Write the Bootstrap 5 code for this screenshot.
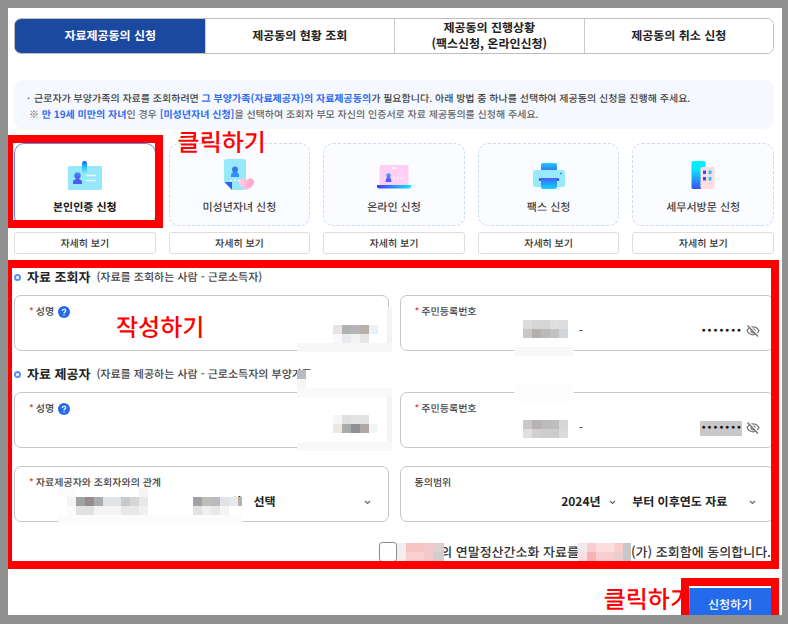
<!DOCTYPE html>
<html lang="ko">
<head>
<meta charset="utf-8">
<meta name="viewport" content="width=device-width, initial-scale=1">
<title>자료제공동의 신청</title>
<link href="https://cdn.jsdelivr.net/npm/bootstrap@5.3.0/dist/css/bootstrap.min.css" rel="stylesheet">
<style>
body{background:#919191;padding:8px 6px 9px 8px;font-family:"Noto Sans CJK KR",sans-serif;font-size:10px;line-height:16px;color:#333;text-rendering:geometricPrecision}
button,input,select{font-family:inherit;text-rendering:inherit}
.sheet{background:#fff;padding:10px 8px 0 6px}
.tabs{border:1px solid #bdbdbd;border-radius:7px}
.tabs .tab{flex:1 1 0;min-height:34px;border:0;border-left:1px solid #ccc;background:#fff;color:#222;font-size:12px;line-height:16px;font-weight:700;padding:0}
.tabs .tab.on{background:#1c49a0;color:#fff;border-color:#1c49a0}
.notice{margin-top:26px;background:#f5f9ff;border-radius:9px;padding:10px 13px 7px}
.notice p{margin:0;line-height:16px;color:#444;font-weight:500}
.notice p.sub{padding-left:2px;color:#666}
.notice .dot{display:inline-block;width:7px}
.notice b,.notice a{color:#2f6bf0;font-weight:700;text-decoration:none}
.methods{display:grid;grid-template-columns:repeat(5,1fr);gap:6px 13px;margin-top:14px}
.method{width:100%;height:83px;border:1px dashed #cbdaf3;border-radius:10px;background:#fafcff;color:#444;font-size:11px;line-height:16px;font-weight:500;padding:15px 0 10px}
.method.on{border:1px solid #5b8def;background:#fff;color:#111;font-weight:700}
.method svg{width:36px;height:36px}
.more{height:22px;border:1px solid #ddd;border-radius:3px;background:#fff;color:#333;font-size:10px;line-height:18px;font-weight:500;padding:0}
.frame{position:absolute;border:8px solid #f00;pointer-events:none;z-index:3}
.frame-card{inset:-8px -7px -2px -9px}
.frame-form{inset:-7px -5px -7px -10px}
.frame-send{inset:-10px -8px 0 -8px;border-bottom:0}
.memo{position:absolute;color:#f00;font-size:24px;line-height:28px;font-weight:500;white-space:nowrap;z-index:2}
.memo-card{left:9px;top:-16px}
.memo-name{left:101px;top:16px}
.memo-send{right:100%;top:-4px;margin-right:-3px}
.form-area{margin-top:13px}
.head{font-size:13px;line-height:20px;font-weight:700;color:#222;margin:0 0 8px;gap:6px}
.head-next{margin-top:13px}
.head small{font-size:11px;font-weight:500;color:#444;white-space:nowrap}
.ring{width:7px;height:7px;border:2px solid #5a90f3;border-radius:50%;box-sizing:border-box}
.pairs{display:grid;grid-template-columns:1fr 1fr;gap:11px}
.pairs-next{margin-top:18px}
.field{position:relative;border:1px solid #c6c6c6;border-radius:7px;padding:6px 13px 8px 14px;min-width:0}
.field label{line-height:18px;color:#444;font-weight:500;display:flex;align-items:center;gap:4px}
.req::before{content:"*";color:#f23c3c;margin-right:-2px}
.line{height:22px}
.plain{border:0;background:transparent;padding:0;width:100%;min-width:0;text-align:right;font-size:12px;line-height:16px;color:#222;outline:0}
.secret{font-family:"DejaVu Sans",sans-serif;font-size:10px;width:42px;height:15px;line-height:15px;color:#111}
.picked{background:#c8c8c8}
.dash{font-size:12px;width:21px;padding-left:5px;text-align:center}
.half{flex:1 1 0;min-width:0;position:relative}
.pick{appearance:none;border:0;background:transparent;padding:0;font-size:12px;line-height:18px;font-weight:700;color:#222}
.rel{flex:0 0 35%}
.span{flex:0 0 37%}
.mosaic{position:absolute;shape-rendering:crispEdges;pointer-events:none;z-index:1}
.m-name1{right:-4px;top:11px}
.m-name2{right:-4px;top:-23px}
.m-no{right:-6px}
.m-no1{top:-3px}
.m-no2{top:-36px}
.m-rel{right:12px;top:-5px}
.eye{border:0;background:none;padding:0;width:14px;height:14px;margin-left:4px}
.eye svg,.help svg{display:block}
.help{border:0;background:none;padding:2px 0 0}
.consent{margin-top:20px;padding-right:3px;height:20px;font-size:13px;line-height:20px;font-weight:500;color:#333;white-space:nowrap}
.consent input{width:18px;height:20px;margin:0;border:1px solid #8a8a8a;border-radius:4px;flex:none}
.consent svg{shape-rendering:crispEdges;flex:none;position:relative}
.mask-a{z-index:1;margin-right:-4px}
.mask-b{margin-left:-1px}
.send-row{margin-top:26px;padding-right:3px}
.send{display:block;width:82px;border:0;background:#246beb;color:#fff;font-size:12px;line-height:20px;font-weight:500;padding:7px 0 0}
</style>
</head>
<body>
<main class="sheet position-relative overflow-hidden">
  <nav class="tabs d-flex overflow-hidden" aria-label="제공동의">
    <button class="tab on" type="button">자료제공동의 신청</button>
    <button class="tab" type="button">제공동의 현황 조회</button>
    <button class="tab" type="button">제공동의 진행상황<br>(팩스신청, 온라인신청)</button>
    <button class="tab" type="button">제공동의 취소 신청</button>
  </nav>

  <section class="notice">
    <p><span class="dot">·</span>근로자가 부양가족의 자료를 조회하려면 <b>그 부양가족(자료제공자)의 자료제공동의</b>가 필요합니다. 아래 방법 중 하나를 선택하여 제공동의 신청을 진행해 주세요.</p>
    <p class="sub">※ <b>만 19세 미만의 자녀</b>인 경우 <a href="#minor">[미성년자녀 신청]</a>을 선택하여 조회자 부모 자신의 인증서로 자료 제공동의를 신청해 주세요.</p>
  </section>

  <svg width="0" height="0" class="position-absolute" aria-hidden="true">
    <defs>
      <linearGradient id="gv" x1="0" y1="0" x2="0" y2="1"><stop offset="0" stop-color="#1ad0f8"/><stop offset="1" stop-color="#3470f8"/></linearGradient>
      <linearGradient id="gw" x1="0" y1="0" x2="0" y2="1"><stop offset="0" stop-color="#3470f8"/><stop offset="1" stop-color="#12d6fa"/></linearGradient>
      <linearGradient id="gp" x1="0" y1="0" x2="0" y2="1"><stop offset="0" stop-color="#3a9cf8"/><stop offset="1" stop-color="#4a50f5"/></linearGradient>
      <linearGradient id="gh" x1="0" y1="0" x2="1" y2="0"><stop offset="0" stop-color="#4a36f5"/><stop offset="1" stop-color="#12e6fb"/></linearGradient>
      <linearGradient id="gb" x1="0" y1="0" x2="0" y2="1"><stop offset="0" stop-color="#00f2fb"/><stop offset=".3" stop-color="#08e5fb"/><stop offset="1" stop-color="#3a50fa"/></linearGradient>
      <linearGradient id="gc" x1="0" y1="0" x2="0" y2="1"><stop offset="0" stop-color="#2a50f5"/><stop offset=".45" stop-color="#1fc0f8"/><stop offset="1" stop-color="#5ac8f8" stop-opacity=".4"/></linearGradient>
      <linearGradient id="gr" x1="0" y1="0" x2="1" y2="0"><stop offset="0" stop-color="#ffd2e4"/><stop offset="1" stop-color="#ff9fc9"/></linearGradient>
      <symbol id="chev" viewBox="0 0 7 5"><path d="M1 1l2.500 2.500L6 1" fill="none" stroke="#666" stroke-width="1.200"/></symbol>
      <symbol id="hidden-eye" viewBox="0 0 14 14"><path d="M1 6.500C2.500 4 4.500 2.800 7 2.800S11.500 4 13 6.500C11.500 9.500 9.500 10.800 7 10.800S2.500 9.500 1 6.500z" fill="none" stroke="#777" stroke-width="1.300"/><circle cx="7" cy="6.800" r="2" fill="none" stroke="#777" stroke-width="1.200"/><path d="M2.800 1.200L13 12" stroke="#fff" stroke-width="1.500"/><path d="M1.500 1.500L12 12.500" stroke="#777" stroke-width="1.400"/></symbol>
      <symbol id="q" viewBox="0 0 12 12"><circle cx="6" cy="6" r="6" fill="#246beb"/><path d="M4.300 4.900C4.300 2.700 7.700 2.700 7.700 4.700 7.700 5.900 6 5.900 6 7.200M6 8.200v1.200" fill="none" stroke="#fff" stroke-width="1.200"/></symbol>
    </defs>
  </svg>

  <section class="methods">
    <div class="position-relative">
      <button class="method on d-flex flex-column align-items-center justify-content-between" type="button">
        <svg viewBox="0 0 36 36" aria-hidden="true"><rect x="1" y="7" width="34" height="24" rx="1.500" fill="#96e8fa"/><rect x="15" y="2" width="5" height="12" rx="2.500" fill="url(#gc)"/><circle cx="10.500" cy="16.500" r="3.200" fill="url(#gp)"/><path d="M6 25v-2c0-2 2-2.500 3-3h3c1 .500 3 1 3 3v2z" fill="#4d5cf7"/><path d="M9 18h3v3H9z" fill="#4a60f6"/><path d="M19.500 16.500h9.500M19.500 21.500h9.500" stroke="#e9fbff" stroke-width="1.500"/></svg>
        <span>본인인증 신청</span>
      </button>
      <div class="frame frame-card"></div>
    </div>
    <div class="position-relative">
      <button class="method d-flex flex-column align-items-center justify-content-between" type="button" id="minor">
        <svg viewBox="0 0 36 36" aria-hidden="true"><path d="M6 0h16a3 3 0 0 1 3 3v25a3 3 0 0 1-3 3h-10L3 23V3a3 3 0 0 1 3-3z" fill="#96e8fa"/><circle cx="14" cy="10.500" r="3" fill="#3478f5"/><path d="M10 18v-2c0-2 1.500-2.500 2.500-3h3c1 .500 2.500 1 2.500 3v2z" fill="#3590f6"/><path d="M3.500 23H11v8z" fill="#2564ee"/><path d="M9 21.500h10" stroke="#fff" stroke-width="1.600" stroke-dasharray="2 2"/><path d="M25.500 21.500c2-4 7.500-2.500 7.500 1.500 0 3-3.500 6-7.500 8-4-2-7.500-5-7.500-8 0-4 5.500-5.500 7.500-1.500z" fill="url(#gr)"/></svg>
        <span>미성년자녀 신청</span>
      </button>
      <span class="memo memo-card">클릭하기</span>
    </div>
    <div>
      <button class="method d-flex flex-column align-items-center justify-content-between" type="button">
        <svg viewBox="0 0 36 36" aria-hidden="true"><rect x="3.500" y="6" width="29" height="20.500" rx="1.500" fill="#ffd0f3"/><rect x="16" y="8" width="4.500" height="2" rx="1" fill="#fff"/><circle cx="12.500" cy="16.500" r="2.300" fill="#5b8df8"/><path d="M9.500 23l.500-3c.500-2 4.500-2 5 0l.500 3z" fill="#4d60f8"/><path d="M11 17h3v3h-3z" fill="#5478f8"/><path d="M18 19h10" stroke="#fff" stroke-width="1.500" stroke-dasharray="1.500 2"/><path d="M1 26h34v1.500a2 2 0 0 1-2 2H3a2 2 0 0 1-2-2z" fill="url(#gh)"/></svg>
        <span>온라인 신청</span>
      </button>
    </div>
    <div>
      <button class="method d-flex flex-column align-items-center justify-content-between" type="button">
        <svg viewBox="0 0 36 36" aria-hidden="true"><path d="M10 12V6a2 2 0 0 1 2-2h12a2 2 0 0 1 2 2v6z" fill="url(#gv)"/><rect x="2" y="11" width="32" height="17" rx="2.500" fill="#9aeafd"/><path d="M9 20.500h18" stroke="#4036e6" stroke-width="2.500" stroke-linecap="round"/><path d="M10 20h16v8a2 2 0 0 1-2 2H12a2 2 0 0 1-2-2z" fill="url(#gw)"/><circle cx="30" cy="14.500" r="1" fill="#2585ef"/></svg>
        <span>팩스 신청</span>
      </button>
    </div>
    <div>
      <button class="method d-flex flex-column align-items-center justify-content-between" type="button">
        <svg viewBox="0 0 36 36" aria-hidden="true"><rect x="6.500" y="2" width="14" height="28" rx="1.500" fill="url(#gb)"/><rect x="15.500" y="8" width="14" height="22" rx="1.500" fill="#ffdcdd"/><path d="M18 11.500h3v3.500h-3zM18 18h3v3.500h-3z" fill="#3a4ef8"/><path d="M23.500 11.500h3v3.500h-3zM23.500 18h3v3.500h-3z" fill="#12cdf5"/></svg>
        <span>세무서방문 신청</span>
      </button>
    </div>
    <button class="more" type="button">자세히 보기</button>
    <button class="more" type="button">자세히 보기</button>
    <button class="more" type="button">자세히 보기</button>
    <button class="more" type="button">자세히 보기</button>
    <button class="more" type="button">자세히 보기</button>
  </section>

  <form class="form-area position-relative">
    <h2 class="head d-flex align-items-center"><span class="ring"></span>자료 조회자 <small>(자료를 조회하는 사람 - 근로소득자)</small></h2>
    <div class="pairs">
      <div class="field">
        <div class="d-flex align-items-center gap-1"><label class="req" for="n1">성명</label><button class="help" type="button" aria-label="도움말"><svg width="12" height="12"><use href="#q"/></svg></button></div>
        <div class="line d-flex align-items-center"><input class="plain" id="n1" type="text"></div>
        <span class="memo memo-name">작성하기</span>
        <svg class="mosaic m-name1" width="95" height="45" aria-hidden="true"><path fill="#fff" d="M0 0h95v45H0z"/><path fill="#f3f3f3" d="M90 0h5v36h-5z"/><path fill="#f7f7f7" d="M0 36h95v9H0z"/><path fill="#e8e4e1" d="M36 18h9v9h-9z"/><path fill="#b0b3b2" d="M45 18h9v9h-9z"/><path fill="#b5b5b9" d="M54 18h9v9h-9z"/><path fill="#b9b1a9" d="M63 18h9v9h-9z"/><path fill="#e9f1f7" d="M72 18h9v9h-9z"/><path fill="#f9f9f9" d="M36 27h9v9h-9z"/><path fill="#e8eaed" d="M45 27h9v9h-9z"/><path fill="#f3f3f3" d="M54 27h9v9h-9z"/><path fill="#e5e5e5" d="M63 27h9v9h-9z"/></svg>
      </div>
      <div class="field">
        <label class="req" for="r1">주민등록번호</label>
        <div class="line d-flex align-items-center">
          <div class="half"><input class="plain" id="r1" type="text"><svg class="mosaic m-no m-no1" width="60" height="36" aria-hidden="true"><path fill="#f8f8f8" d="M0 27h60v9H0z"/><path fill="#dcdcdc" d="M9 0h9v9H9z"/><path fill="#d8d6d5" d="M18 0h9v9h-9z"/><path fill="#d5d5d5" d="M27 0h9v9h-9z"/><path fill="#dfdfdf" d="M36 0h9v9h-9z"/><path fill="#dbdddc" d="M45 0h9v9h-9z"/><path fill="#c8c8c8" d="M9 9h9v9H9z"/><path fill="#b5afae" d="M18 9h9v9h-9z"/><path fill="#bcbab7" d="M27 9h9v9h-9z"/><path fill="#c2c2c2" d="M36 9h9v9h-9z"/><path fill="#d2d6da" d="M45 9h9v9h-9z"/></svg></div>
          <span class="dash">-</span>
          <div class="half d-flex justify-content-end"><input class="plain secret" type="password" value="1234567" aria-label="주민등록번호 뒷자리"></div>
          <button class="eye" type="button" aria-label="보기"><svg width="14" height="14"><use href="#hidden-eye"/></svg></button>
        </div>
      </div>
    </div>

    <h2 class="head head-next d-flex align-items-center"><span class="ring"></span>자료 제공자 <small>(자료를 제공하는 사람 - 근로소득자의 부양가족</small></h2>
    <div class="pairs">
      <div class="field">
        <div class="d-flex align-items-center gap-1"><label class="req" for="n2">성명</label><button class="help" type="button" aria-label="도움말"><svg width="12" height="12"><use href="#q"/></svg></button></div>
        <div class="line d-flex align-items-center"><input class="plain" id="n2" type="text"></div>
        <svg class="mosaic m-name2" width="95" height="81" aria-hidden="true"><path fill="#fff" d="M9 0h86v18H9zM0 18h95v63H0z"/><path fill="#b8bbbf" d="M0 0h9v9H0z"/><path fill="#f5f5f5" d="M0 9h9v9H0z"/><path fill="#f9f9f9" d="M0 18h95v9H0z"/><path fill="#f4f4f4" d="M90 27h5v45h-5z"/><path fill="#f8f8f8" d="M0 72h95v9H0z"/><path fill="#f6f6f6" d="M36 45h9v9h-9z"/><path fill="#e0e0e0" d="M45 45h9v9h-9z"/><path fill="#e3e2e4" d="M54 45h9v9h-9z"/><path fill="#e2e2e2" d="M63 45h9v9h-9z"/><path fill="#ebe7e3" d="M36 54h9v9h-9z"/><path fill="#aaabab" d="M45 54h9v9h-9z"/><path fill="#8f9093" d="M54 54h9v9h-9z"/><path fill="#b1a8a8" d="M63 54h9v9h-9z"/><path fill="#f2f6f9" d="M72 54h9v9h-9z"/></svg>
      </div>
      <div class="field">
        <label class="req" for="r2">주민등록번호</label>
        <div class="line d-flex align-items-center">
          <div class="half"><input class="plain" id="r2" type="text"><svg class="mosaic m-no m-no2" width="60" height="54" aria-hidden="true"><path fill="#fdfdfd" d="M0 0h60v18H0z"/><path fill="#c8c8c8" d="M9 36h9v9H9z"/><path fill="#b8b3b2" d="M18 36h9v9h-9z"/><path fill="#bbb" d="M27 36h9v9h-9z"/><path fill="#bfbebb" d="M36 36h9v9h-9z"/><path fill="#d5d8d8" d="M45 36h9v9h-9z"/><path fill="#dfdfdf" d="M9 45h9v9H9z"/><path fill="#d2cfcd" d="M18 45h9v9h-9z"/><path fill="#cbcdcf" d="M27 45h9v9h-9z"/><path fill="#ccc" d="M36 45h9v9h-9z"/><path fill="#dadbdd" d="M45 45h9v9h-9z"/></svg></div>
          <span class="dash">-</span>
          <div class="half d-flex justify-content-end"><input class="plain secret picked" type="password" value="1234567" aria-label="주민등록번호 뒷자리"></div>
          <button class="eye" type="button" aria-label="보기"><svg width="14" height="14"><use href="#hidden-eye"/></svg></button>
        </div>
      </div>
    </div>

    <div class="pairs pairs-next">
      <div class="field">
        <label class="req" for="rel">자료제공자와 조회자와의 관계</label>
        <div class="line d-flex align-items-center">
          <div class="half text-end pe-2"><span class="pick pe-1">의</span><svg class="mosaic m-rel" width="184" height="35" aria-hidden="true"><path fill="#fff" d="M0 9h184v26H0z"/><path fill="#fbfbfb" d="M0 0h18v9H0zM0 27h184v8H0zM9 18h9v9H9z"/><path fill="#f4f4f4" d="M81 0h9v9h-9zM9 9h9v9H9zM36 18h27v9H36zM153 18h9v9h-9zM162 18h9v9h-9z"/><path fill="#a2a2a4" d="M18 9h9v9h-9zM135 9h9v9h-9z"/><path fill="#968c8c" d="M27 9h9v9h-9z"/><path fill="#aaabab" d="M36 9h9v9h-9z"/><path fill="#e2e3e7" d="M45 9h18v9H45zM162 9h9v9h-9z"/><path fill="#c8c9cc" d="M63 9h9v9h-9z"/><path fill="#d6d6d7" d="M72 9h9v9h-9z"/><path fill="#e8e8e8" d="M81 9h9v9h-9zM63 18h18v9H63zM171 9h9v9h-9zM153 18h9v9h-9z"/><path fill="#efefef" d="M81 18h9v9h-9zM144 18h9v9h-9z"/><path fill="#bfbcb9" d="M144 9h9v9h-9z"/><path fill="#b9babd" d="M153 9h9v9h-9z"/><path fill="#b9b0aa" d="M180 9h4v9h-4z"/><path fill="#e1e1df" d="M18 18h18v9H18zM135 18h9v9h-9z"/></svg></div>
          <div class="rel d-flex align-items-center justify-content-between"><select class="pick flex-fill" id="rel"><option>선택</option></select><svg width="7" height="5" class="me-1" aria-hidden="true"><use href="#chev"/></svg></div>
        </div>
      </div>
      <div class="field">
        <label for="year">동의범위</label>
        <div class="line d-flex align-items-center justify-content-end">
          <select class="pick" id="year"><option>2024년</option></select><svg width="7" height="5" class="ms-2" aria-hidden="true"><use href="#chev"/></svg>
          <div class="span d-flex align-items-center justify-content-between ms-3"><select class="pick flex-fill" aria-label="자료 범위"><option>부터 이후연도 자료</option></select><svg width="7" height="5" class="me-1" aria-hidden="true"><use href="#chev"/></svg></div>
        </div>
      </div>
    </div>

    <div class="consent d-flex align-items-center justify-content-end">
      <input class="form-check-input" type="checkbox" id="agree">
      <label class="d-flex align-items-center" for="agree">
        <svg class="mask-a" width="47" height="18" aria-hidden="true"><path fill="#f6eeee" d="M0 0h9v18H0z"/><path fill="#f8c3c3" d="M9 0h27v9H9z"/><path fill="#f9cfcf" d="M9 9h27v9H9z"/><path fill="#f3c9cb" d="M27 0h10v18H27z"/><path fill="#e2cdcf" d="M36 0h9v9h-9z"/><path fill="#d3cdd0" d="M36 9h11v9H36zM45 0h2v9h-2z"/></svg>
        <span>의 연말정산간소화 자료를</span>
        <svg class="mask-b" width="53" height="18" aria-hidden="true"><path fill="#f0eaec" d="M0 0h9v9H0z"/><path fill="#f5dfe0" d="M0 9h9v9H0z"/><path fill="#f9cdcf" d="M9 0h9v9H9zM18 9h9v9h-9z"/><path fill="#f8b1b5" d="M9 9h9v9H9z"/><path fill="#fbdedd" d="M18 0h9v9h-9zM27 0h9v9h-9z"/><path fill="#f9cecd" d="M27 9h9v9h-9zM36 0h9v9h-9z"/><path fill="#e8cfcf" d="M36 9h9v9h-9z"/><path fill="#c8c6c8" d="M45 0h8v18h-8z"/></svg>
        <span>(가) 조회함에 동의합니다.</span>
      </label>
    </div>
    <div class="frame frame-form"></div>
  </form>

  <div class="send-row d-flex justify-content-end">
    <div class="position-relative">
      <span class="memo memo-send">클릭하기</span>
      <button class="send" type="button">신청하기</button>
      <div class="frame frame-send"></div>
    </div>
  </div>
</main>
<script src="https://cdn.jsdelivr.net/npm/bootstrap@5.3.0/dist/js/bootstrap.bundle.min.js"></script>
</body>
</html>
